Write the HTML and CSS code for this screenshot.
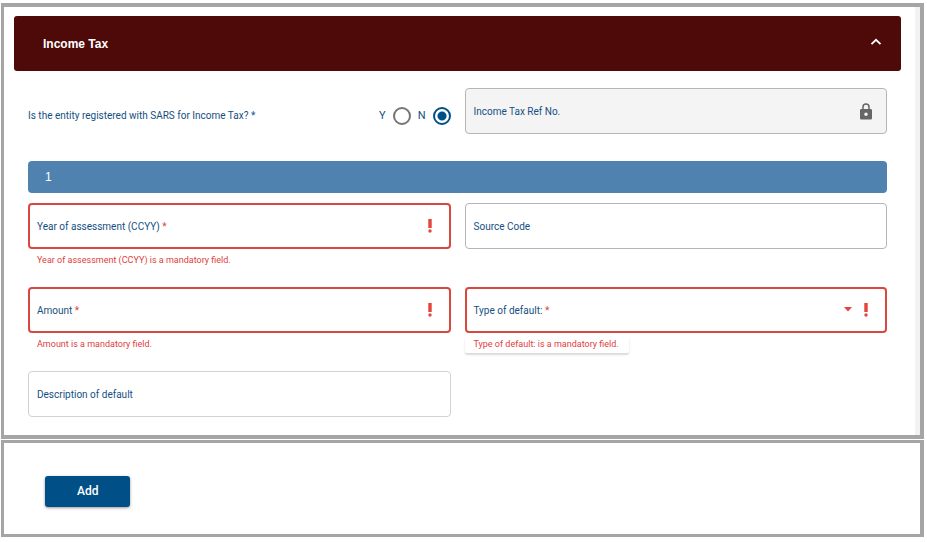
FILE: index.html
```
<!DOCTYPE html>
<html lang="en">
<head>
  <meta charset="UTF-8">
  <meta name="viewport" content="width=device-width, initial-scale=1.0">
  <title>Income Tax</title>
  <link rel="stylesheet" href="styles.css">
</head>
<body>
  <form class="page">
    <section class="panel">
      <button type="button" class="panel-header" aria-expanded="true">
        <span>Income Tax</span>
        <svg class="chevron" viewBox="0 0 12 8" aria-hidden="true"><path d="M1.5 6.2 6 1.8l4.500 4.400" fill="none" stroke="currentColor" stroke-width="1.800"/></svg>
      </button>

      <div class="panel-body">
        <div class="grid">
          <div class="question" role="radiogroup" aria-labelledby="registered">
            <span id="registered" class="question-text">Is the entity registered with SARS for Income Tax? *</span>
            <label for="reg-yes">Y</label>
            <input type="radio" name="registered" id="reg-yes" value="Y">
            <label for="reg-no">N</label>
            <input type="radio" name="registered" id="reg-no" value="N" checked>
          </div>
          <div class="field locked">
            <label for="ref-no">Income Tax Ref No.</label>
            <input type="text" id="ref-no" disabled>
            <svg class="lock" viewBox="0 0 12 17" aria-hidden="true"><path d="M3 6.500V4a3 3 0 0 1 6 0v2.500" fill="none" stroke="currentColor" stroke-width="1.500"/><path fill="currentColor" fill-rule="evenodd" d="M1.200 6h9.600A1.200 1.200 0 0 1 12 7.200v8.100a1.200 1.200 0 0 1-1.200 1.200H1.200A1.200 1.200 0 0 1 0 15.300V7.200A1.200 1.200 0 0 1 1.200 6zM6 9.500a1.800 1.800 0 1 0 0 3.600 1.800 1.800 0 0 0 0-3.600z"/></svg>
          </div>
        </div>

        <h3 class="entry-bar">1</h3>

        <div class="grid entries">
          <div class="cell">
            <div class="field invalid">
              <label for="year">Year of assessment (CCYY) <span class="star">*</span></label>
              <input type="text" id="year" required>
              <svg class="alert" viewBox="0 0 4 14" aria-hidden="true"><path fill="currentColor" d="M.3 0h3.400v9H.3zM2 10.300a1.700 1.700 0 1 1 0 3.400 1.700 1.700 0 0 1 0-3.400z"/></svg>
            </div>
            <p class="error">Year of assessment (CCYY) is a mandatory field.</p>
          </div>
          <div class="cell">
            <div class="field">
              <label for="source">Source Code</label>
              <input type="text" id="source">
            </div>
          </div>
          <div class="cell">
            <div class="field invalid">
              <label for="amount">Amount <span class="star">*</span></label>
              <input type="text" id="amount" required>
              <svg class="alert" viewBox="0 0 4 14" aria-hidden="true"><path fill="currentColor" d="M.3 0h3.400v9H.3zM2 10.300a1.700 1.700 0 1 1 0 3.400 1.700 1.700 0 0 1 0-3.400z"/></svg>
            </div>
            <p class="error">Amount is a mandatory field.</p>
          </div>
          <div class="cell">
            <div class="field invalid">
              <label for="type">Type of default: <span class="star">*</span></label>
              <select id="type" required>
                <option value=""></option>
              </select>
              <svg class="arrow" viewBox="0 0 8 5" aria-hidden="true"><path fill="currentColor" d="M0 0h8L4 4.500z"/></svg>
              <svg class="alert" viewBox="0 0 4 14" aria-hidden="true"><path fill="currentColor" d="M.3 0h3.400v9H.3zM2 10.300a1.700 1.700 0 1 1 0 3.400 1.700 1.700 0 0 1 0-3.400z"/></svg>
            </div>
            <p class="error raised">Type of default: is a mandatory field.</p>
          </div>
          <div class="cell">
            <div class="field light">
              <label for="description">Description of default</label>
              <input type="text" id="description">
            </div>
          </div>
        </div>
      </div>
    </section>

    <section class="actions">
      <button type="button" class="add">Add</button>
    </section>
  </form>
</body>
</html>
```
FILE: styles.css
```
* {
  box-sizing: border-box;
}

body {
  margin: 0;
  padding: 3px 3px 0 1px;
  background-color: #fff;
  color: #14507f;
  font-family: Roboto, "Liberation Sans", sans-serif;
  font-size: 10px;
  line-height: 16px;
}

.page {
  display: flex;
  flex-direction: column;
  gap: 1px;
}

.panel {
  border: 4px solid #a5a5a5;
  border-left-width: 3px;
  padding: 9px 19px 18px 10px;
  /* scrollbar track along the right edge */
  box-shadow: inset -5px 0 #f2f2f2;
}

.panel-header {
  display: flex;
  align-items: center;
  justify-content: space-between;
  width: 100%;
  padding: 20px 19px 19px 29px;
  border: none;
  border-radius: 3px;
  background-color: #4e0909;
  color: #fff;
  font-family: "Liberation Sans", Arial, sans-serif;
  font-size: 12px;
  font-weight: bold;
  line-height: 16px;
  cursor: pointer;
}

.chevron {
  width: 12px;
  height: 8px;
  margin-bottom: 5px;
}

.panel-body {
  padding: 17px 14px 0;
}

.grid {
  display: grid;
  grid-template-columns: 1fr 1fr;
  column-gap: 14px;
}

.question {
  display: flex;
  align-items: center;
  padding-top: 9px;
}

.question-text {
  flex: 1;
}

.question label {
  margin: 0 7px;
  font-size: 11px;
}

input[type="radio"] {
  appearance: none;
  width: 18px;
  height: 18px;
  margin: 0;
  border: 2px solid #757575;
  border-radius: 50%;
}

input[type="radio"]:checked {
  border-color: #004f86;
  background: radial-gradient(circle, #004f86 4px, #fff 5px);
}

.field {
  display: flex;
  align-items: center;
  height: 46px;
  padding: 0 15px 0 8px;
  border: 1px solid #b5b5b5;
  border-radius: 4px;
}

.field label {
  padding-top: 2px;
}

.field input,
.field select {
  flex: 1;
  min-width: 0;
  height: 30px;
  padding: 0 8px;
  border: none;
  outline: none;
  background: transparent;
  color: inherit;
  font: inherit;
}

.field select {
  appearance: none;
}

.locked {
  padding-right: 14px;
  background-color: #f4f4f4;
}

.light {
  border-color: #d2d2d2;
}

.invalid {
  padding: 0 17px 0 7px;
  border: 2px solid #d9483f;
}

.star,
.error {
  color: #e0403d;
}

.lock {
  width: 12px;
  height: 17px;
  color: #666;
}

.alert {
  width: 4px;
  height: 14px;
  color: #e5443c;
}

.arrow {
  width: 8px;
  height: 5px;
  margin: 0 12px 2px 0;
  color: #e5443c;
}

.entry-bar {
  margin: 27px 0 10px;
  padding: 8px 17px;
  border-radius: 4px;
  background-color: #4f82ae;
  color: #fff;
  font-family: "Liberation Sans", Arial, sans-serif;
  font-size: 12px;
  font-weight: normal;
}

.entries {
  row-gap: 18px;
}

.error {
  width: fit-content;
  margin: 3px 0 0;
  padding: 0 10px 1px 9px;
  font-size: 9px;
}

.raised {
  border-radius: 2px;
  box-shadow: 0 2px 2px rgba(0, 0, 0, 0.15);
}

.actions {
  border: 3px solid #a5a5a5;
  border-right-width: 4px;
  padding: 33px 41px 27px;
}

.add {
  display: block;
  padding: 7px 32px 8px;
  border: none;
  border-radius: 3px;
  background-color: #004f86;
  box-shadow: 0 1px 3px rgba(0, 0, 0, 0.4);
  color: #fff;
  font-family: Roboto, sans-serif;
  font-size: 12px;
  font-weight: 500;
  line-height: 16px;
  cursor: pointer;
}
```
